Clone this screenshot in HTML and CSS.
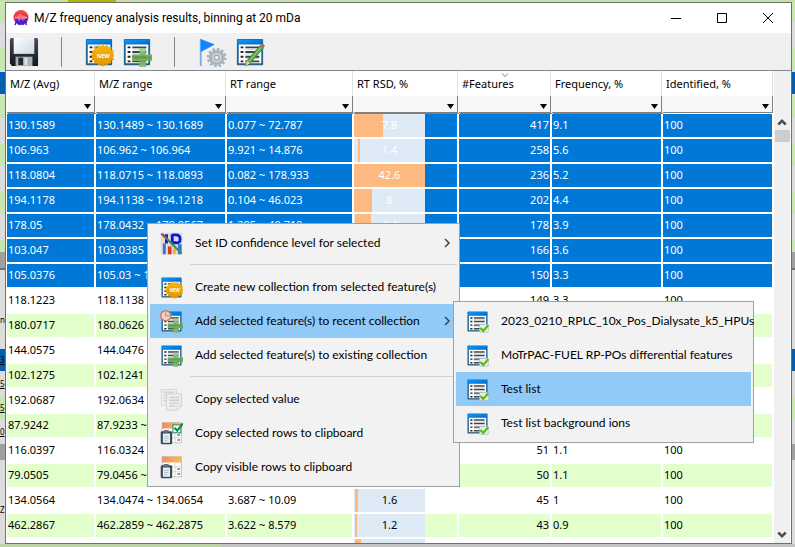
FILE: index.html
```html
<!DOCTYPE html>
<html lang="en">
<head>
<meta charset="utf-8">
<title>M/Z frequency analysis results</title>
<link rel="stylesheet" href="styles.css">
</head>
<body>
<svg class="defs" aria-hidden="true">
  <defs>
    <linearGradient id="gBlue" x1="0" y1="0" x2="1" y2="1"><stop offset="0" stop-color="#0a9bff"/><stop offset="1" stop-color="#0068c4"/></linearGradient>
    <linearGradient id="gFrame" x1="0" y1="0" x2="0" y2="1"><stop offset="0" stop-color="#0a6fc0"/><stop offset="1" stop-color="#2f5f80"/></linearGradient>
    <linearGradient id="gGold" x1="0" y1="0" x2="0" y2="1"><stop offset="0" stop-color="#fdb515"/><stop offset="1" stop-color="#e09300"/></linearGradient>
    <linearGradient id="gGreen" x1="0" y1="0" x2="0" y2="1"><stop offset="0" stop-color="#b5d8a0"/><stop offset=".5" stop-color="#5aa047"/><stop offset="1" stop-color="#8cc878"/></linearGradient>
    <linearGradient id="gDisk" x1="0" y1="0" x2="0" y2="1"><stop offset="0" stop-color="#454a58"/><stop offset="1" stop-color="#15171c"/></linearGradient>
    <linearGradient id="gLabel" x1="0" y1="0" x2="1" y2="1"><stop offset="0" stop-color="#ffffff"/><stop offset="1" stop-color="#cbd9e2"/></linearGradient>
    <linearGradient id="gHead" x1="0" y1="0" x2="1" y2="0"><stop offset="0" stop-color="#f28b68"/><stop offset="1" stop-color="#fbbd4c"/></linearGradient>
    <linearGradient id="gApp" x1="0" y1="0" x2="0" y2="1"><stop offset="0" stop-color="#f5503a"/><stop offset=".5" stop-color="#e8304e"/><stop offset="1" stop-color="#5a1cc8"/></linearGradient>
    <symbol id="list" viewBox="0 0 32 32">
      <rect x="2" y="2" width="28" height="28" rx="1" fill="url(#gFrame)"/>
      <rect x="3" y="3" width="26" height="5" fill="url(#gBlue)"/>
      <rect x="4" y="8" width="24" height="20" fill="#fff"/>
      <path d="M6 11h3M6 16h3M6 21h3M6 26h3" stroke="#222" stroke-width="2"/>
      <path d="M11 11h15M11 16h15M11 21h15M11 26h15" stroke="#3d4248" stroke-width="2"/>
      <path d="M11 13h15M11 18h15M11 23h15" stroke="#c6cbd0" stroke-width="1"/>
    </symbol>
    <symbol id="list-new" viewBox="0 0 32 32">
      <use href="#list"/>
      <path fill="url(#gGold)" d="M20 7l2 3 3-2 1 3.500 3-1 0 3.500 3 .5-1 3 2 2-2 2 1 3-3 .5 0 3-3-.5-1 3-3-1.500-2 3-2-3-3 1.500-1-3-3 .5 0-3-3-.5 1-3-2-2 2-2-1-3 3-.5 0-3.500 3 1 1-3.500 3 2z"/>
      <text x="20.500" y="22" text-anchor="middle" class="badge-text">NEW</text>
    </symbol>
    <symbol id="list-add" viewBox="0 0 32 32">
      <use href="#list"/>
      <path fill="url(#gGreen)" fill-opacity=".92" stroke="#79b566" stroke-width=".7" d="M19 12h6v7h7v6h-7v7h-6v-7h-8v-6h8z"/>
    </symbol>
    <symbol id="list-recent" viewBox="0 0 32 32">
      <use href="#list-add"/>
      <circle cx="8" cy="8" r="7" fill="#ecd3bb" stroke="#d2796c" stroke-width="2"/>
      <path d="M8 3v5h5" fill="none" stroke="#a98a72" stroke-width="1.500"/>
    </symbol>
    <symbol id="list-check" viewBox="0 0 32 32">
      <use href="#list"/>
      <rect x="19" y="20" width="12" height="11" rx="1" fill="#e8eef2" stroke="#aebcc4"/>
      <path d="M20 25l4 4 7-8" fill="none" stroke="#5fb515" stroke-width="3"/>
    </symbol>
    <symbol id="list-edit" viewBox="0 0 32 32">
      <use href="#list"/>
      <path d="M13 25L27 9l3 3-14 16-5 3z" fill="#58a845" stroke="#2f7a2a" stroke-width=".8"/>
      <path d="M15 26L28 11" stroke="#a8df94"/>
      <path d="M11 31l2-6 3 3z" fill="#e9cfa2"/>
      <path d="M27 9l2-2 3 2-2 3z" fill="#cf5b55"/>
    </symbol>
    <symbol id="save" viewBox="0 0 32 32">
      <path d="M3 1h26q2 0 2 2v28H3l-2-3V3q0-2 2-2z" fill="url(#gDisk)"/>
      <rect x="5" y="1" width="22" height="17" fill="url(#gLabel)"/>
      <rect x="7" y="21" width="18" height="10" fill="#aab0b4"/>
      <rect x="10" y="22" width="5" height="8" fill="#25282e"/>
      <path d="M18 22v8" stroke="#dfe3e5" stroke-width="3"/>
    </symbol>
    <symbol id="flag" viewBox="0 0 32 32">
      <rect x="3" y="2" width="2" height="29" fill="#6fb2f5"/>
      <path d="M4 2l15 6-15 8z" fill="#1483ff"/>
      <circle cx="21" cy="22" r="9" fill="none" stroke="#a3afb9" stroke-width="3" stroke-dasharray="2.500 2.210"/>
      <circle cx="21" cy="22" r="8.500" fill="#b0bbc4"/>
      <circle cx="21" cy="22" r="6" fill="#cad2d8" stroke="#98a5af"/>
      <circle cx="21" cy="22" r="2.500" fill="#f0f0f0" stroke="#84919c"/>
    </symbol>
    <symbol id="ident" viewBox="0 0 32 32">
      <rect x="1" y="1" width="30" height="30" fill="#dcdcdc"/>
      <path d="M9 3v13M17 3v12M17 4h5q6 0 6 6t-6 5h-5" fill="none" stroke="#1414dc" stroke-width="4"/>
      <path d="M4 16h4v15H4z" fill="#2f78d0"/><path d="M11 20h5v11h-5z" fill="#d83c28"/>
      <path d="M18 23h4v8h-4z" fill="#f0b429"/><path d="M25 17h5v14h-5z" fill="#2f78d0"/>
      <path d="M4 4L30 30" stroke="#3f8f45" stroke-width="3"/><path d="M2 2l5 5" stroke="#c23b50" stroke-width="3"/>
    </symbol>
    <symbol id="pages" viewBox="0 0 32 32">
      <path d="M2 2h21v22H2z" fill="#eee" stroke="#d0d0d0"/>
      <path d="M5 6h14M5 10h5M5 14h5M5 18h5" stroke="#d4d4d4" stroke-width="2"/>
      <path d="M9 8h21v17l-6 6H9z" fill="#ececec" stroke="#cbcbcb"/>
      <path d="M13 13h14M13 17h14M13 21h14M13 25h8" stroke="#cecece" stroke-width="2"/>
      <path d="M24 31v-6h6z" fill="#fafafa" stroke="#ccc"/>
    </symbol>
    <symbol id="rows" viewBox="0 0 32 32">
      <rect x="3" y="1" width="27" height="28" fill="#fff" stroke="#b5b5b5"/>
      <rect x="3" y="1" width="27" height="8" fill="url(#gHead)"/>
      <path d="M12 9v20M21 9v20M3 15h27M3 22h27" stroke="#c9c9c9"/>
      <path d="M24 18h4M24 25h4" stroke="#777" stroke-width="2"/>
      <rect x="1" y="13" width="16" height="18" rx="2" fill="#34495d"/>
      <rect x="4" y="16" width="10" height="13" fill="#e7edf1"/>
      <rect x="5" y="11" width="7" height="4" rx="1" fill="#65737f"/>
      <path d="M6 20h6M6 23h6M6 26h4" stroke="#9aa8b2"/>
    </symbol>
    <symbol id="rows-check" viewBox="0 0 32 32">
      <use href="#rows"/>
      <rect x="18" y="4" width="11" height="11" fill="#fff" stroke="#2e8b57" stroke-width="1.500"/>
      <path d="M20 8l4 4 8-10" fill="none" stroke="#12894a" stroke-width="3"/>
    </symbol>
    <symbol id="chev" viewBox="0 0 8 10"><path d="M2 1l4 4-4 4" fill="none" stroke="#444" stroke-width="1.500"/></symbol>
  </defs>
</svg>

<div class="desktop">
  <div class="strip top"></div>
  <div class="strip left"><span>n</span><span class="first">3</span><span>5</span><span>5</span><span>0</span><span class="last">Z</span></div>

  <main class="window">
    <header class="titlebar">
      <svg class="app-icon" viewBox="0 0 16 16"><circle cx="8" cy="7.500" r="7.500" fill="url(#gApp)"/><path d="M2 7.500h2M5 5.500v4M7 4v7M9 5v5M11 6v3M12 7.500h2" stroke="#ffc4c4" stroke-width="1"/><path d="M2 15l2-5 2 4 2-4 2 4 3-4v5" fill="none" stroke="#3522dc" stroke-width="1.500"/></svg>
      <h1>M/Z frequency analysis results, binning at 20 mDa</h1>
      <button class="ctl" aria-label="Minimize"><svg viewBox="0 0 12 12"><path d="M1 6.500h10" /></svg></button>
      <button class="ctl" aria-label="Maximize"><svg viewBox="0 0 12 12"><path d="M1.500 1.500h9v9h-9z"/></svg></button>
      <button class="ctl" aria-label="Close"><svg viewBox="0 0 12 12"><path d="M1 1l10 10M11 1L1 11"/></svg></button>
    </header>

    <nav class="toolbar">
      <button aria-label="Save"><svg><use href="#save"/></svg></button>
      <span class="divider"></span>
      <button aria-label="New collection"><svg><use href="#list-new"/></svg></button>
      <button aria-label="Add to collection"><svg><use href="#list-add"/></svg></button>
      <span class="divider"></span>
      <button aria-label="Flag settings"><svg><use href="#flag"/></svg></button>
      <button aria-label="Edit list"><svg><use href="#list-edit"/></svg></button>
    </nav>

    <section class="results">
      <div class="viewport">
      <table>
        <colgroup><col class="c-mz"><col class="c-range"><col class="c-rt"><col class="c-rsd"><col class="c-feat"><col class="c-freq"><col></colgroup>
        <thead>
          <tr class="names">
            <th><div>M/Z (Avg)</div></th><th><div>M/Z range</div></th><th><div>RT range</div></th><th><div>RT RSD, %</div></th>
            <th><div>#Features<svg class="sort" viewBox="0 0 8 5"><path d="M1 .5l3 3 3-3" fill="none" stroke="#777"/></svg></div></th>
            <th><div>Frequency, %</div></th><th><div>Identified, %</div></th>
          </tr>
          <tr class="filters">
            <td><div><select aria-label="Filter M/Z"></select></div></td><td><div><select aria-label="Filter M/Z range"></select></div></td><td><div><select aria-label="Filter RT range"></select></div></td><td><div><select aria-label="Filter RT RSD"></select></div></td><td><div><select aria-label="Filter features"></select></div></td><td><div><select aria-label="Filter frequency"></select></div></td><td><div><select aria-label="Filter identified"></select></div></td>
          </tr>
        </thead>
        <tbody>
          <tr class="sel"><td>130.1589</td><td>130.1489 ~ 130.1689</td><td>0.077 ~ 72.787</td><td><div class="bar" style="--from:0px;--to:29px">7.8</div></td><td>417</td><td>9.1</td><td>100</td></tr>
          <tr class="sel"><td>106.963</td><td>106.962 ~ 106.964</td><td>9.921 ~ 14.876</td><td><div class="bar" style="--from:4px;--to:6px">1.4</div></td><td>258</td><td>5.6</td><td>100</td></tr>
          <tr class="sel"><td>118.0804</td><td>118.0715 ~ 118.0893</td><td>0.082 ~ 178.933</td><td><div class="bar" style="--from:0px;--to:71px">42.6</div></td><td>236</td><td>5.2</td><td>100</td></tr>
          <tr class="sel"><td>194.1178</td><td>194.1138 ~ 194.1218</td><td>0.104 ~ 46.023</td><td><div class="bar" style="--from:0px;--to:18px">8</div></td><td>202</td><td>4.4</td><td>100</td></tr>
          <tr class="sel"><td>178.05</td><td>178.0432 ~ 178.0567</td><td>1.285 ~ 40.719</td><td><div class="bar" style="--from:1px;--to:17px">4.4</div></td><td>178</td><td>3.9</td><td>100</td></tr>
          <tr class="sel"><td>103.047</td><td>103.0385</td><td></td><td></td><td>166</td><td>3.6</td><td>100</td></tr>
          <tr class="sel"><td>105.0376</td><td>105.03 ~ 1</td><td></td><td></td><td>150</td><td>3.3</td><td>100</td></tr>
          <tr><td>118.1223</td><td>118.1138</td><td></td><td></td><td>149</td><td>3.3</td><td>100</td></tr>
          <tr><td>180.0717</td><td>180.0626</td><td></td><td></td><td></td><td></td><td></td></tr>
          <tr><td>144.0575</td><td>144.0476</td><td></td><td></td><td></td><td></td><td></td></tr>
          <tr><td>102.1275</td><td>102.1241</td><td></td><td></td><td></td><td></td><td></td></tr>
          <tr><td>192.0687</td><td>192.0634</td><td></td><td></td><td></td><td></td><td></td></tr>
          <tr><td>87.9242</td><td>87.9233 ~</td><td></td><td></td><td></td><td></td><td></td></tr>
          <tr><td>116.0397</td><td>116.0324</td><td></td><td></td><td>51</td><td>1.1</td><td>100</td></tr>
          <tr><td>79.0505</td><td>79.0456 ~</td><td></td><td></td><td>50</td><td>1.1</td><td>100</td></tr>
          <tr><td>134.0564</td><td>134.0474 ~ 134.0654</td><td>3.687 ~ 10.09</td><td><div class="bar" style="--from:1px;--to:4px">1.6</div></td><td>45</td><td>1</td><td>100</td></tr>
          <tr><td>462.2867</td><td>462.2859 ~ 462.2875</td><td>3.622 ~ 8.579</td><td><div class="bar" style="--from:1px;--to:3px">1.2</div></td><td>43</td><td>0.9</td><td>100</td></tr>
          <tr><td></td><td></td><td></td><td><div class="bar" style="--from:1px;--to:7px"></div></td><td></td><td></td><td></td></tr>
        </tbody>
      </table>
      </div>
      <div class="scrollbar">
        <button aria-label="Scroll up"><svg viewBox="0 0 8 6"><path d="M1 5l3-3 3 3"/></svg></button>
        <span class="thumb"></span>
        <button class="down" aria-label="Scroll down"><svg viewBox="0 0 8 6"><path d="M1 1l3 3 3-3"/></svg></button>
      </div>
    </section>
  </main>

  <div class="strip right"></div>
  <div class="strip bottom"></div>

  <div class="menu context" role="menu">
    <button role="menuitem"><svg class="ico"><use href="#ident"/></svg>Set ID confidence level for selected<svg class="more"><use href="#chev"/></svg></button>
    <hr>
    <button role="menuitem"><svg class="ico"><use href="#list-new"/></svg>Create new collection from selected feature(s)</button>
    <button role="menuitem" class="active"><svg class="ico"><use href="#list-recent"/></svg>Add selected feature(s) to recent collection<svg class="more"><use href="#chev"/></svg></button>
    <button role="menuitem"><svg class="ico"><use href="#list-add"/></svg>Add selected feature(s) to existing collection</button>
    <hr>
    <button role="menuitem"><svg class="ico"><use href="#pages"/></svg>Copy selected value</button>
    <button role="menuitem"><svg class="ico"><use href="#rows-check"/></svg>Copy selected rows to clipboard</button>
    <button role="menuitem"><svg class="ico"><use href="#rows"/></svg>Copy visible rows to clipboard</button>
  </div>
  <div class="menu submenu" role="menu">
    <button role="menuitem"><svg class="ico"><use href="#list-check"/></svg>2023_0210_RPLC_10x_Pos_Dialysate_k5_HPUs</button>
    <button role="menuitem"><svg class="ico"><use href="#list-check"/></svg>MoTrPAC-FUEL RP-POs differential features</button>
    <button role="menuitem" class="active"><svg class="ico"><use href="#list-check"/></svg>Test list</button>
    <button role="menuitem"><svg class="ico"><use href="#list-check"/></svg>Test list background ions</button>
  </div>
</div>
</body>
</html>
```
FILE: styles.css
```css
* { box-sizing: border-box; }
body { margin: 0; font: 11px/16px "Noto Sans", "Open Sans", sans-serif; color: #000; }
button { border: 0; padding: 0; background: none; font: inherit; color: inherit; }
.defs { position: absolute; width: 0; height: 0; }

.desktop {
  position: relative;
  display: grid;
  grid-template: 2px minmax(0, 1fr) 3px / 5px minmax(0, 1fr) 3px;
  height: 100vh;
  overflow: hidden;
}
.strip.top { grid-column: 1 / -1; background: linear-gradient(90deg, #c8dfb0 68px, #b4b400 68px 116px, #c8dfb0 116px); }
.strip.bottom { grid-column: 1 / -1; background: linear-gradient(90deg, #bcd3a4 222px, #c4c4c4 222px); }
.strip.left, .strip.right {
  background: linear-gradient(#c8e6af 20px, #dcdcdc 20px 46px, #c8e6af 46px 68px, #dcdcdc 68px 70px, #0060b0 70px 92px, #dcdcdc 92px 94px, #c8e6af 94px 116px, #dcdcdc 116px 142px, #c8e6af 142px 164px, #dcdcdc 164px 190px, #c8e6af 190px 212px, #dcdcdc 212px 238px, #c8e6af 238px 250px, #a0a0a0 250px 266px, #707070 266px 268px, #dcdcdc 268px 347px, #0060b0 347px 369px, #dcdcdc 369px 395px, #c8e6af 395px 417px, #dcdcdc 417px 442px, #a0a0a0 442px 458px, #dcdcdc 458px);
}
.strip.left { display: flex; flex-direction: column; align-items: flex-start; padding-top: 306px; font: 8px/24px "Noto Sans", sans-serif; }
.strip.left .first { margin-top: 16px; }
.strip.left span + span { text-decoration: underline; }
.strip.left span.last { margin-top: 54px; text-decoration: none; }

.window { display: flex; flex-direction: column; min-height: 0; border: 1px solid #6b746b; background: #fff; }

.titlebar { display: flex; flex: none; align-items: center; height: 30px; padding-left: 7px; }
.titlebar h1 { flex: 1; margin: 0 0 0 5px; font: 12px/16px Roboto, "Noto Sans", sans-serif; }
.app-icon { width: 16px; height: 16px; }
.ctl { display: grid; place-items: center; width: 46px; height: 30px; }
.ctl svg { width: 12px; height: 12px; fill: none; stroke: #000; }

.toolbar { display: flex; flex: none; align-items: center; gap: 8px; height: 37px; padding-left: 3px; background: #f0f0f0; }
.toolbar button { width: 30px; height: 32px; }
.toolbar svg { display: block; width: 30px; height: 30px; }
.divider { width: 1px; height: 30px; margin: 0 14px; background: #868686; }

.results { display: flex; flex: 1; min-height: 0; padding-left: 1px; border-top: 1px solid #828790; }
.viewport { flex: 1; min-width: 0; overflow: hidden; }
table { width: 100%; table-layout: fixed; border-collapse: separate; border-spacing: 0; }
.c-mz { width: 89px; }
.c-range { width: 131px; }
.c-rt { width: 127px; }
.c-rsd { width: 105px; }
.c-feat { width: 93px; }
.c-freq { width: 111px; }
th, td { padding: 0; white-space: nowrap; overflow: hidden; text-align: left; font-weight: 400; }
.names div { position: relative; height: 25px; margin-right: 1px; padding: 5px 3px 0; border-right: 1px solid #e0e0e0; }
.sort { position: absolute; top: 2px; left: 42px; width: 8px; height: 5px; }
.filters div { position: relative; height: 17px; margin: 0 1px 1px 0; border-right: 1px solid #808080; border-bottom: 1px solid #808080; background: #f7f7f7; }
.filters td:not(:last-child) div { box-shadow: 1px 0 #f7f7f7, 1px 1px #808080; }
.filters div::after { content: ""; position: absolute; right: 3px; top: 8px; width: 7px; height: 5px; background: #000; clip-path: polygon(0 0, 100% 0, 50% 100%); pointer-events: none; }
.filters select { display: block; appearance: none; width: 100%; height: 16px; border: 0; background: none; }

tbody td { height: 25px; padding: 0 0 2px 1px; border: solid #fff; border-width: 0 2px 2px 0; }
tbody tr:nth-child(odd) td { background: #e3ffcc; }
tbody tr.sel td { background: #0078d7; color: #fff; }
tbody td:nth-child(4) { padding: 0; }
tbody td:nth-child(5) { padding-right: 1px; text-align: right; }
.bar {
  width: 71px;
  height: 23px;
  line-height: 22px;
  text-align: center;
  background: linear-gradient(90deg, #ddeaf6 var(--from), #fdb97f var(--from) var(--to), #ddeaf6 var(--to));
}

.scrollbar { display: flex; flex-direction: column; align-items: center; width: 17px; padding-top: 42px; background: #f0f0f0; border-right: 1px solid #fff; }
.scrollbar button { display: grid; place-items: center; width: 100%; height: 17px; }
.scrollbar svg { width: 10px; height: 8px; fill: none; stroke: #505050; stroke-width: 2; }
.thumb { width: 15px; height: 12px; background: #cdcdcd; }
.scrollbar .down { margin-top: auto; }

.menu { position: absolute; padding: 2px; border: 1px solid #a0a0a0; background: #f2f2f2; font: 12px/16px Lato, "Noto Sans", sans-serif; }
.context { left: 147px; top: 223px; width: 313px; }
.submenu { left: 453px; top: 301px; width: 301px; }
.menu button { display: flex; align-items: center; width: 100%; height: 34px; padding: 0 6px 0 10px; white-space: nowrap; text-align: left; }
.menu .active { background: #91c9f7; }
.menu hr { height: 1px; margin: 4px 0 5px 40px; border: 0; background: #d0d0d0; }
.ico { flex: none; width: 23px; height: 23px; margin-right: 12px; }
.more { flex: none; width: 8px; height: 10px; margin-left: auto; }
.badge-text { font: 700 6px "Open Sans", sans-serif; fill: #fff; }
```
